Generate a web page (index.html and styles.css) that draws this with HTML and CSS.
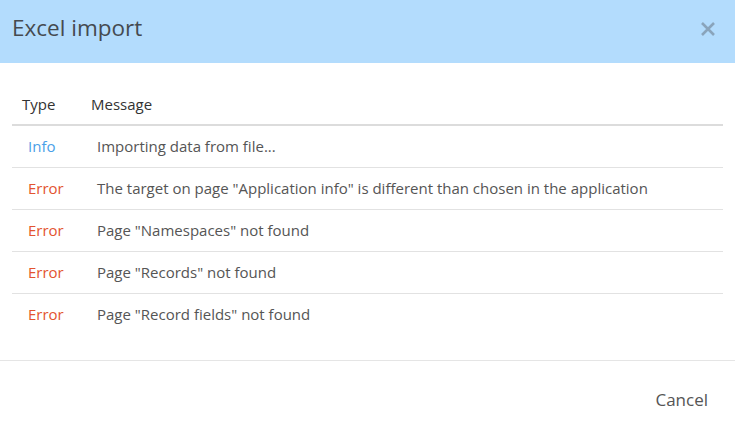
FILE: index.html
```html
<!DOCTYPE html>
<html>
<head>
<meta charset="utf-8">
<link rel="stylesheet" href="styles.css">
</head>
<body>
<div class="dialog">
  <div class="header">
    <h1 class="title">Excel import</h1>
    <button class="close" aria-label="Close">
      <svg width="16" height="16" viewBox="0 0 16 16"><path d="M2 2L14 14M14 2L2 14" stroke="#8aa4bb" stroke-width="2.6" stroke-linecap="butt"/></svg>
    </button>
  </div>
  <div class="body">
    <table class="log">
      <thead>
        <tr><th class="c-type">Type</th><th>Message</th></tr>
      </thead>
      <tbody>
        <tr><td class="c-type info">Info</td><td>Importing data from file...</td></tr>
        <tr><td class="c-type error">Error</td><td>The target on page "Application info" is different than chosen in the application</td></tr>
        <tr><td class="c-type error">Error</td><td>Page "Namespaces" not found</td></tr>
        <tr><td class="c-type error">Error</td><td>Page "Records" not found</td></tr>
        <tr><td class="c-type error">Error</td><td>Page "Record fields" not found</td></tr>
      </tbody>
    </table>
  </div>
  <div class="footer">
    <button class="cancel">Cancel</button>
  </div>
</div>
</body>
</html>
```
FILE: styles.css
```css
* { box-sizing: border-box; }
html, body { margin: 0; padding: 0; background: #fff; }
body { font-family: "Open Sans", "Liberation Sans", sans-serif; color: #555; }
.dialog { width: 735px; height: 429px; display: flex; flex-direction: column; }
.header {
  height: 63px;
  background: #b3dcfd;
  display: flex;
  align-items: center;
  justify-content: space-between;
  padding: 0 19px 0 12px;
}
.title { margin: 0 0 9px 0; font-size: 22.5px; font-weight: 400; color: #454a50; }
.close { border: 0; background: none; padding: 0; display: flex; margin-bottom: 6px; }
.body { padding: 20px 12px 0 12px; }
.log { width: 100%; border-collapse: collapse; font-size: 15px; }
.log th {
  text-align: left; font-weight: 400; color: #333;
  height: 42px; padding: 0 10px; border-bottom: 2px solid #dcdcdc;
}
.log td { height: 42px; padding: 0 16px; border-bottom: 1px solid #e2e2e2; color: #555; }
.log tbody tr:last-child td { border-bottom: 0; }
.log .c-type { width: 69px; }
.info { color: #4a9fe8 !important; }
.error { color: #e3542f !important; }
.footer {
  margin-top: 25px;
  border-top: 1px solid #e5e5e5;
  flex: 1;
  display: flex; align-items: center; justify-content: flex-end;
  padding: 9px 27px 0 0;
}
.cancel { border: 0; background: none; font-family: inherit; font-size: 17px; color: #555; padding: 0; }
```
